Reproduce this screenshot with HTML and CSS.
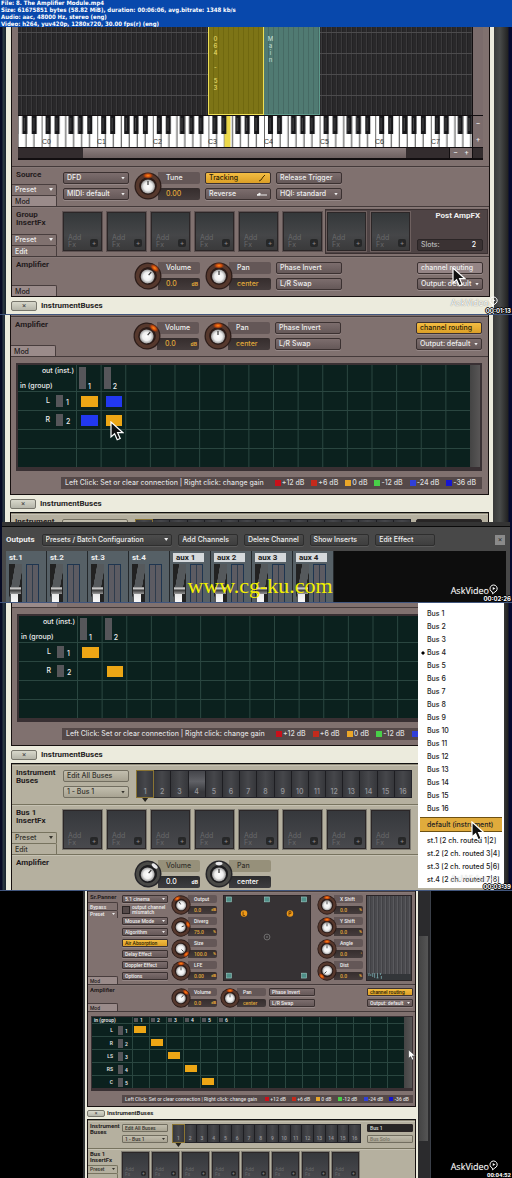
FILE: index.html
```html
<!DOCTYPE html>
<html lang="en">
<head>
<meta charset="utf-8">
<title>8. The Amplifier Module.mp4</title>
<link rel="stylesheet" href="styles.css">
</head>
<body>
<svg class="defs" aria-hidden="true">
  <defs>
    <radialGradient id="cap"><stop offset="0" stop-color="#fff"/><stop offset=".6" stop-color="#eee"/><stop offset="1" stop-color="#999"/></radialGradient>
    <radialGradient id="glow"><stop offset="0" stop-color="#ff8a1c"/><stop offset=".5" stop-color="#c4470c"/><stop offset="1" stop-color="#5a2a18" stop-opacity="0"/></radialGradient>
    <symbol id="knob" viewBox="0 0 28 28">
      <circle cx="14" cy="14" r="13.5" fill="#2c1d1a"/>
      <circle cx="14" cy="14" r="10.5" fill="none" stroke="#56382d" stroke-width="3.5"/>
      <circle cx="14" cy="14" r="8.5" fill="#2c1c19"/>
      <ellipse cx="14" cy="3.6" rx="6" ry="3.4" fill="url(#glow)"/>
      <circle cx="14" cy="14.5" r="7" fill="url(#cap)"/>
      <path d="M14 9v4" stroke="#333" stroke-width="1.2"/>
    </symbol>
    <symbol id="knob-dark" viewBox="0 0 28 28">
      <circle cx="14" cy="14" r="13.5" fill="#26262a"/>
      <circle cx="14" cy="14" r="10.5" fill="none" stroke="#4a4a47" stroke-width="3"/>
      <circle cx="14" cy="14" r="8.8" fill="#1c1c1e"/>
      <ellipse cx="14" cy="3.6" rx="3.5" ry="1.8" fill="#e8e8ea"/>
      <circle cx="14" cy="14.5" r="7" fill="url(#cap)"/>
      <path d="M14 9v4" stroke="#333" stroke-width="1.2"/>
    </symbol>
    <symbol id="pointer" viewBox="0 0 14 20"><path d="M1 1v15l3.6-3.2 2.6 6 3-1.3-2.6-5.8H13z" fill="#111" stroke="#fff" stroke-width="1.2"/></symbol>
    <symbol id="pointer-light" viewBox="0 0 14 20"><path d="M1 1v15l3.6-3.2 2.6 6 3-1.3-2.6-5.8H13z" fill="#fff" stroke="#333" stroke-width="1"/></symbol>
    <symbol id="bubble" viewBox="0 0 10 12"><path d="M4 10.8 3.6 8.7A4 4 0 1 1 6.6 8.7z" fill="none" stroke="#fff" stroke-width="1.1"/><path d="M4.2 3.2v3.4l2.8-1.7z" fill="#fff"/></symbol>
    <pattern id="octave" x="23.6" width="55.6" height="31" patternUnits="userSpaceOnUse">
      <rect width="55.6" height="31" fill="#fff"/>
      <path d="M.3 0v31M8.2 0v31M16.1 0v31M24.1 0v31M32 0v31M40 0v31M47.9 0v31" stroke="#444" stroke-width="1"/>
    </pattern>
    <pattern id="sharps" x="23.6" width="55.6" height="31" patternUnits="userSpaceOnUse">
      <path d="M4 0h5v18H4zM13 0h5v18h-5zM27 0h5v18h-5zM36.3 0h5v18h-5zM45.7 0h5v18h-5z" fill="#17171a"/>
      <path d="M5.5 2h1v13h-1zM14.5 2h1v13h-1zM28.5 2h1v13h-1zM37.8 2h1v13h-1zM47.2 2h1v13h-1z" fill="#4a4a4c"/>
    </pattern>
  </defs>
</svg>

<header class="info">
  <p>File: 8. The Amplifier Module.mp4</p>
  <p>Size: 61675851 bytes (58.82 MiB), duration: 00:06:06, avg.bitrate: 1348 kb/s</p>
  <p>Audio: aac, 48000 Hz, stereo (eng)</p>
  <p>Video: h264, yuv420p, 1280x720, 30.00 fps(r) (eng)</p>
</header>

<main>
<section class="frame">
  <div class="window">
    <div class="panel">
      <div class="mapper">
        <div class="zones">
          <div class="zone zone-gold">064 - 53</div>
          <div class="zone zone-teal">Main</div>
        </div>
        <div class="vbar"></div>
        <div class="keys">
          <svg viewBox="0 0 454 31" role="img" aria-label="Keyboard">
            <rect width="454" height="31" fill="url(#octave)"/>
            <rect x="206.5" width="6" height="31" fill="#ecd84a"/>
            <rect width="454" height="31" fill="url(#sharps)"/>
            <g class="key-names"><text x="24" y="28">C0</text><text x="79" y="28">C1</text><text x="135" y="28">C2</text><text x="190" y="28">C3</text><text x="246" y="28">C4</text><text x="302" y="28">C5</text><text x="357" y="28">C6</text><text x="413" y="28">C7</text></g>
          </svg>
        </div>
        <div class="zoomers vertical"><button>−</button><button>+</button></div>
        <div class="hbar"><div class="track"><div class="thumb"></div></div><div class="zoomers"><button>−</button><button>+</button></div></div>
        <div class="corner"></div>
      </div>

      <div class="module">
        <div class="rail"><h2>Source</h2><button class="tab menu-tab">Preset</button><button class="tab lit">Mod</button></div>
        <div class="col">
          <span class="pick"><select aria-label="Source type"><option>DFD</option></select></span>
          <span class="pick"><select aria-label="MIDI channel"><option>MIDI: default</option></select></span>
        </div>
        <label class="dial"><svg class="knob"><use href="#knob"/></svg><span class="readout"><span class="name">Tune</span><span class="value"><input value="0.00"></span></span></label>
        <div class="col">
          <button class="ctl on spread">Tracking <svg viewBox="0 0 8 8"><path d="M1 7 3 6 5 3 7 1" fill="none" stroke="#4a3300"/></svg></button>
          <button class="ctl spread">Reverse <svg viewBox="0 0 10 8"><path d="M0 5h10M0 5l3-2v2z" fill="#eee" stroke="#eee"/></svg></button>
        </div>
        <div class="col">
          <button class="ctl">Release Trigger</button>
          <span class="pick"><select aria-label="Quality"><option>HQI: standard</option></select></span>
        </div>
      </div>

      <div class="module inserts">
        <div class="rail"><h2>Group<br>InsertFx</h2><button class="tab menu-tab">Preset</button><button class="tab">Edit</button></div>
        <div class="slots">
          <button class="slot">Add<br>Fx<i>+</i></button><button class="slot">Add<br>Fx<i>+</i></button><button class="slot">Add<br>Fx<i>+</i></button><button class="slot">Add<br>Fx<i>+</i></button><button class="slot">Add<br>Fx<i>+</i></button><button class="slot">Add<br>Fx<i>+</i></button>
        </div>
        <div class="post">
          <button class="slot">Add<br>Fx<i>+</i></button><button class="slot">Add<br>Fx<i>+</i></button>
          <div class="post-info"><h3>Post AmpFX</h3><label class="field">Slots:<input value="2"></label></div>
        </div>
      </div>

      <div class="module">
        <div class="rail"><h2>Amplifier</h2><button class="tab lit">Mod</button></div>
        <div class="col"></div>
        <label class="dial"><svg class="knob turn-right"><use href="#knob"/></svg><span class="readout"><span class="name">Volume</span><span class="value"><input value="0.0"><b>dB</b></span></span></label>
        <label class="dial"><svg class="knob"><use href="#knob"/></svg><span class="readout"><span class="name">Pan</span><span class="value"><input value="center"></span></span></label>
        <div class="col"><button class="ctl">Phase Invert</button><button class="ctl">L/R Swap</button></div>
        <div class="col last">
          <button class="ctl hover">channel routing</button>
          <span class="pick"><select aria-label="Output"><option>Output: default</option></select></span>
        </div>
      </div>
    </div>
    <div class="buses-bar"><button class="fold">×</button><h2>InstrumentBuses</h2></div>
  </div>
  <svg class="pointer at-routing"><use href="#pointer"/></svg>
  <div class="brand">AskVideo<svg><use href="#bubble"/></svg></div>
  <time class="stamp">00:01:13</time>
</section>

<section class="frame shifted">
  <div class="window">
    <div class="panel gap-top">
      <div class="module">
        <div class="rail"><h2>Amplifier</h2><button class="tab lit">Mod</button></div>
        <div class="col"></div>
        <label class="dial"><svg class="knob turn-right"><use href="#knob"/></svg><span class="readout"><span class="name">Volume</span><span class="value"><input value="0.0"><b>dB</b></span></span></label>
        <label class="dial"><svg class="knob"><use href="#knob"/></svg><span class="readout"><span class="name">Pan</span><span class="value"><input value="center"></span></span></label>
        <div class="col"><button class="ctl">Phase Invert</button><button class="ctl">L/R Swap</button></div>
        <div class="col last">
          <button class="ctl on">channel routing</button>
          <span class="pick"><select aria-label="Output"><option>Output: default</option></select></span>
        </div>
      </div>
      <div class="routing">
        <div class="matrix">
          <div class="grid">
            <div class="row head"><div class="corner-label"><span>out (inst.)</span><span>in (group)</span></div><div class="out"><i></i>1</div><div class="out"><i></i>2</div></div>
            <div class="row"><div class="in"><span>L</span><i></i><b>1</b></div><button class="cell gold" aria-label="L to 1"></button><button class="cell blue" aria-label="L to 2"></button></div>
            <div class="row"><div class="in"><span>R</span><i></i><b>2</b></div><button class="cell blue" aria-label="R to 1"></button><button class="cell gold" aria-label="R to 2"></button></div>
            <div class="row"><div class="in"></div></div>
            <div class="row"><div class="in"></div></div>
          </div>
          <div class="scroll"></div>
        </div>
        <div class="legend"><p>Left Click: Set or clear connection | Right click: change gain</p><span class="c-red">+12 dB</span><span class="c-brick">+6 dB</span><span class="c-gold">0 dB</span><span class="c-green">-12 dB</span><span class="c-blue">-24 dB</span><span class="c-deep">-36 dB</span></div>
      </div>
    </div>
    <div class="buses-bar"><button class="fold">×</button><h2>InstrumentBuses</h2></div>
    <div class="panel beige">
      <div class="module buses">
        <div class="rail"><h2>Instrument</h2></div>
        <div class="col"><button class="ctl"></button></div>
        <div class="strip"><span class="current"></span><span></span><span></span><span></span><span></span><span></span><span></span><span></span><span></span><span></span><span></span><span></span><span></span><span></span><span></span><span></span></div>
        <div class="col last"><span class="field"></span></div>
      </div>
    </div>
  </div>
  <div class="outputs">
    <div class="toolbar">
      <h2>Outputs</h2>
      <span class="pick wide"><select aria-label="Presets"><option>Presets / Batch Configuration</option></select></span>
      <button class="ctl">Add Channels</button><button class="ctl">Delete Channel</button><button class="ctl">Show Inserts</button><button class="ctl">Edit Effect</button>
      <button class="close" aria-label="Close">×</button>
    </div>
    <div class="mixer">
      <div class="channel"><h3>st.1</h3><div class="fader"></div><div class="meter"></div></div>
      <div class="channel"><h3>st.2</h3><div class="fader"></div><div class="meter"></div></div>
      <div class="channel"><h3>st.3</h3><div class="fader"></div><div class="meter"></div></div>
      <div class="channel"><h3>st.4</h3><div class="fader"></div><div class="meter"></div></div>
      <div class="channel aux"><h3>aux 1</h3><div class="fader"></div><div class="meter"></div></div>
      <div class="channel aux"><h3>aux 2</h3><div class="fader"></div><div class="meter"></div></div>
      <div class="channel aux"><h3>aux 3</h3><div class="fader"></div><div class="meter"></div></div>
      <div class="channel aux"><h3>aux 4</h3><div class="fader"></div><div class="meter"></div></div>
    </div>
  </div>
  <svg class="pointer at-cell"><use href="#pointer"/></svg>
  <p class="site">www.cg-ku.com</p>
  <div class="brand">AskVideo<svg><use href="#bubble"/></svg></div>
  <time class="stamp">00:02:26</time>
</section>

<section class="frame">
  <div class="window">
    <div class="panel">
      <div class="sliver"></div>
      <div class="routing">
        <div class="matrix">
          <div class="grid">
            <div class="row head"><div class="corner-label"><span>out (inst.)</span><span>in (group)</span></div><div class="out"><i></i>1</div><div class="out"><i></i>2</div></div>
            <div class="row"><div class="in"><span>L</span><i></i><b>1</b></div><button class="cell gold" aria-label="L to 1"></button></div>
            <div class="row"><div class="in"><span>R</span><i></i><b>2</b></div><span></span><button class="cell gold" aria-label="R to 2"></button></div>
            <div class="row"><div class="in"></div></div>
            <div class="row"><div class="in"></div></div>
          </div>
          <div class="scroll"></div>
        </div>
        <div class="legend"><p>Left Click: Set or clear connection | Right click: change gain</p><span class="c-red">+12 dB</span><span class="c-brick">+6 dB</span><span class="c-gold">0 dB</span><span class="c-green">-12 dB</span><span class="c-blue ghost"></span><span class="c-deep ghost"></span></div>
      </div>
    </div>
    <div class="buses-bar"><button class="fold">×</button><h2>InstrumentBuses</h2></div>
    <div class="panel beige">
      <div class="module buses">
        <div class="rail"><h2>Instrument<br>Buses</h2></div>
        <div class="col"><button class="ctl">Edit All Buses</button><span class="pick"><select aria-label="Bus"><option>1 - Bus 1</option></select></span></div>
        <div class="strip"><span class="current">1</span><span>2</span><span>3</span><span class="warm">4</span><span>5</span><span>6</span><span>7</span><span>8</span><span>9</span><span>10</span><span>11</span><span>12</span><span>13</span><span>14</span><span>15</span><span>16</span></div>
        <div class="col last"></div>
      </div>
      <div class="module inserts">
        <div class="rail"><h2>Bus 1<br>InsertFx</h2><button class="tab menu-tab">Preset</button><button class="tab">Edit</button></div>
        <div class="slots">
          <button class="slot">Add<br>Fx<i>+</i></button><button class="slot">Add<br>Fx<i>+</i></button><button class="slot">Add<br>Fx<i>+</i></button><button class="slot">Add<br>Fx<i>+</i></button><button class="slot">Add<br>Fx<i>+</i></button><button class="slot">Add<br>Fx<i>+</i></button><button class="slot">Add<br>Fx<i>+</i></button><button class="slot">Add<br>Fx<i>+</i></button>
        </div>
      </div>
      <div class="module">
        <div class="rail"><h2>Amplifier</h2></div>
        <div class="col"></div>
        <label class="dial"><svg class="knob turn-right"><use href="#knob-dark"/></svg><span class="readout"><span class="name">Volume</span><span class="value"><input value="0.0"><b>dB</b></span></span></label>
        <label class="dial"><svg class="knob"><use href="#knob-dark"/></svg><span class="readout"><span class="name">Pan</span><span class="value"><input value="center"></span></span></label>
      </div>
    </div>
  </div>
  <ul class="popup">
    <li><button>Bus 1</button></li><li><button>Bus 2</button></li><li><button>Bus 3</button></li><li class="checked"><button>Bus 4</button></li><li><button>Bus 5</button></li><li><button>Bus 6</button></li><li><button>Bus 7</button></li><li><button>Bus 8</button></li><li><button>Bus 9</button></li><li><button>Bus 10</button></li><li><button>Bus 11</button></li><li><button>Bus 12</button></li><li><button>Bus 13</button></li><li><button>Bus 14</button></li><li><button>Bus 15</button></li><li><button>Bus 16</button></li>
    <li class="chosen"><button>default (instrument)</button></li>
    <li><button>st.1 [2 ch. routed 1|2]</button></li><li><button>st.2 [2 ch. routed 3|4]</button></li><li><button>st.3 [2 ch. routed 5|6]</button></li><li><button>st.4 [2 ch. routed 7|8]</button></li>
  </ul>
  <div class="brand faded">AskVideo<svg><use href="#bubble"/></svg></div>
  <svg class="pointer at-menu"><use href="#pointer"/></svg>
  <time class="stamp">00:03:39</time>
</section>

<section class="frame compact">
  <div class="window">
    <div class="panel">
      <div class="module">
        <div class="rail"><h2>Sr.Panner</h2><button class="tab">Bypass</button><button class="tab menu-tab">Preset</button><button class="tab lit push">Mod</button></div>
        <div class="col">
          <span class="pick"><select aria-label="Layout"><option>5.1 cinema</option></select></span>
          <label class="check"><input type="checkbox"><span>output channel<br>mismatch</span></label>
          <span class="pick"><select aria-label="Mode"><option>Mouse Mode</option></select></span>
          <span class="pick"><select aria-label="Algorithm"><option>Algorithm</option></select></span>
          <button class="ctl on">Air Absorption</button>
          <button class="ctl">Delay Effect</button>
          <button class="ctl">Doppler Effect</button>
          <button class="ctl">Options</button>
        </div>
        <div class="col">
          <label class="dial"><svg class="knob turn-left"><use href="#knob"/></svg><span class="readout"><span class="name">Output</span><span class="value"><input value="0.0"><b>dB</b></span></span></label>
          <label class="dial"><svg class="knob turn-east"><use href="#knob"/></svg><span class="readout"><span class="name">Diverg</span><span class="value"><input value="75.0"><b>%</b></span></span></label>
          <label class="dial"><svg class="knob turn-full"><use href="#knob"/></svg><span class="readout"><span class="name">Size</span><span class="value"><input value="100.0"><b>%</b></span></span></label>
          <label class="dial"><svg class="knob"><use href="#knob"/></svg><span class="readout"><span class="name">LFE</span><span class="value"><input value="0.00"><b>dB</b></span></span></label>
        </div>
        <div class="surround">
          <svg viewBox="0 0 87 86" role="img" aria-label="Surround field">
            <g fill="#4f8f88" stroke="#9fd0c8" stroke-width=".6"><rect x="2" y="1" width="5" height="5"/><rect x="41" y="1" width="5" height="5"/><rect x="79" y="1" width="5" height="5"/><rect x="2" y="79" width="5" height="5"/><rect x="79" y="79" width="5" height="5"/></g>
            <circle cx="20" cy="18" r="3.3" fill="#f09a18"/><circle cx="67" cy="18" r="3.3" fill="#f09a18"/>
            <path d="M19 16v4h2M66 20v-4h2v2h-2" fill="none" stroke="#5a3200" stroke-width=".8"/>
            <circle cx="43.5" cy="42" r="3" fill="none" stroke="#888" stroke-width=".7"/><circle cx="43.5" cy="42" r=".7" fill="#999"/>
          </svg>
        </div>
        <div class="col">
          <label class="dial"><svg class="knob"><use href="#knob"/></svg><span class="readout"><span class="name">X Shift</span><span class="value"><input value="0.0"><b>%</b></span></span></label>
          <label class="dial"><svg class="knob"><use href="#knob"/></svg><span class="readout"><span class="name">Y Shift</span><span class="value"><input value="0.0"><b>%</b></span></span></label>
          <label class="dial"><svg class="knob"><use href="#knob"/></svg><span class="readout"><span class="name">Angle</span><span class="value"><input value="0.0"><b>°</b></span></span></label>
          <label class="dial"><svg class="knob turn-min"><use href="#knob"/></svg><span class="readout"><span class="name">Dist</span><span class="value"><input value="0.0"><b>%</b></span></span></label>
        </div>
        <div class="levels"><svg viewBox="0 0 46 8"><path d="M2 1v3M4 2v2M6 1v4M8 1v5M11 1v5M14 1v2M10 6h2M15 4v3" stroke="#7fb4b8" stroke-width=".8"/></svg></div>
      </div>
      <div class="module">
        <div class="rail"><h2>Amplifier</h2><button class="tab lit">Mod</button></div>
        <div class="col"></div>
        <label class="dial"><svg class="knob turn-right"><use href="#knob"/></svg><span class="readout"><span class="name">Volume</span><span class="value"><input value="0.0"><b>dB</b></span></span></label>
        <label class="dial"><svg class="knob"><use href="#knob"/></svg><span class="readout"><span class="name">Pan</span><span class="value"><input value="center"></span></span></label>
        <div class="col"><button class="ctl">Phase Invert</button><button class="ctl">L/R Swap</button></div>
        <div class="col last">
          <button class="ctl on">channel routing</button>
          <span class="pick"><select aria-label="Output"><option>Output: default</option></select></span>
        </div>
      </div>
      <div class="routing">
        <div class="matrix">
          <div class="grid">
            <div class="row head"><div class="corner-label"><span>in (group)</span></div><div class="out"><i></i>1</div><div class="out"><i></i>2</div><div class="out"><i></i>3</div><div class="out"><i></i>4</div><div class="out"><i></i>5</div><div class="out"><i></i>6</div></div>
            <div class="row"><div class="in"><span>L</span><i></i><b>1</b></div><button class="cell gold" aria-label="L to 1"></button></div>
            <div class="row"><div class="in"><span>R</span><i></i><b>2</b></div><span></span><button class="cell gold" aria-label="R to 2"></button></div>
            <div class="row"><div class="in"><span>LS</span><i></i><b>3</b></div><span></span><span></span><button class="cell gold" aria-label="LS to 3"></button></div>
            <div class="row"><div class="in"><span>RS</span><i></i><b>4</b></div><span></span><span></span><span></span><button class="cell gold" aria-label="RS to 4"></button></div>
            <div class="row"><div class="in"><span>C</span><i></i><b>5</b></div><span></span><span></span><span></span><span></span><button class="cell gold" aria-label="C to 5"></button></div>
          </div>
          <div class="scroll"></div>
        </div>
        <div class="legend"><p>Left Click: Set or clear connection | Right click: change gain</p><span class="c-red">+12 dB</span><span class="c-brick">+6 dB</span><span class="c-gold">0 dB</span><span class="c-green">-12 dB</span><span class="c-blue">-24 dB</span><span class="c-deep">-36 dB</span></div>
      </div>
    </div>
    <div class="buses-bar"><button class="fold">×</button><h2>InstrumentBuses</h2></div>
    <div class="panel beige">
      <div class="module buses">
        <div class="rail"><h2>Instrument<br>Buses</h2></div>
        <div class="col"><button class="ctl">Edit All Buses</button><span class="pick"><select aria-label="Bus"><option>1 - Bus 1</option></select></span></div>
        <div class="strip"><span class="current">1</span><span>2</span><span>3</span><span>4</span><span>5</span><span>6</span><span>7</span><span>8</span><span>9</span><span>10</span><span>11</span><span>12</span><span>13</span><span>14</span><span>15</span><span>16</span></div>
        <div class="col last"><input class="field" aria-label="Bus name" value="Bus 1"><button class="ctl faint">Bus Solo</button></div>
      </div>
      <div class="module inserts">
        <div class="rail"><h2>Bus 1<br>InsertFx</h2><button class="tab menu-tab">Preset</button><button class="tab"></button></div>
        <div class="slots">
          <button class="slot">Add<br>Fx<i>+</i></button><button class="slot">Add<br>Fx<i>+</i></button><button class="slot">Add<br>Fx<i>+</i></button><button class="slot">Add<br>Fx<i>+</i></button><button class="slot">Add<br>Fx<i>+</i></button><button class="slot">Add<br>Fx<i>+</i></button><button class="slot">Add<br>Fx<i>+</i></button><button class="slot">Add<br>Fx<i>+</i></button>
        </div>
      </div>
    </div>
  </div>
  <div class="page-scroll"><div></div></div>
  <svg class="pointer at-scroll"><use href="#pointer-light"/></svg>
  <div class="brand">AskVideo<svg><use href="#bubble"/></svg></div>
  <time class="stamp">00:04:52</time>
</section>
</main>
</body>
</html>
```
FILE: styles.css
```css
* { box-sizing: border-box; margin: 0; }

body {
  background: #000;
  color: #eee;
  font: 500 7px/8px Inter, Roboto, "Liberation Sans", sans-serif;
}

button, input, select { font: inherit; color: inherit; border: 0; padding: 0; background: none; min-width: 0; border-radius: 0; }
select { appearance: none; }
i, b { font-style: normal; font-weight: inherit; }
ul { list-style: none; padding: 0; }
.defs { position: absolute; width: 0; height: 0; }

/* File details above the stills */
.info {
  display: flex;
  flex-direction: column;
  gap: 1px;
  padding: 0 1px;
  background: #0848ac;
  color: #fff;
  font: 700 6px/6px "DejaVu Sans Condensed", "DejaVu Sans", sans-serif;
}

/* One still of the film */
.frame {
  --ctl-h: 12px;
  --ctl-w: 66px;
  --gap: 5px;
  --row-gap: 4px;
  --rail: 45px;
  --knob: 28px;
  --title: 8px;
  --slot: 39px;
  --label-col: 58px;
  --pad: 5px;
  position: relative;
  display: flex;
  flex-direction: column;
  aspect-ratio: 16 / 9;
  overflow: hidden;
  border-bottom: 1px solid #41567e;
  background:
    linear-gradient(to right, #060a24 2px, #2d3a44 3px, #17222c 6px, transparent 6px),
    linear-gradient(to left, #050a30 3px, #222 4px, #484a49 12px, #3a3b3b 18px);
}
.window {
  flex: 1;
  min-height: 0;
  overflow: hidden;
  margin: 0 18px 0 6px;
  border: solid #ecebdd;
  border-width: 0 4px 0 5px;
  background: #ecebdd;
}
.shifted .window { margin: 0 19px 0 5px; }
.panel {
  border: 1px solid #16100f;
  border-top: 0;
  background: #80716f;
}
.gap-top { padding-top: 1px; }

/* Zone map and keyboard */
.mapper {
  display: grid;
  grid-template-columns: 1fr 10px;
  gap: 1px;
  margin: 0 6px 6px;
  padding-bottom: 2px;
  background: #120e10;
}
.zones {
  display: grid;
  grid-template-columns: 190px 56px 56px 1fr;
  height: 88px;
  background:
    repeating-linear-gradient(to bottom, transparent 0 5px, #4c4b4d 5px 6px, transparent 6px 21px),
    repeating-linear-gradient(to right, #29282a 0 3px, #3a393b 3px 4px, #232224 4px 5px);
}
.zone {
  padding: 8px 0 0 2px;
  font-size: 6px;
  line-height: 8px;
  writing-mode: vertical-lr;
  text-orientation: upright;
}
.zone-gold {
  grid-column: 2;
  border: solid #eedf55;
  border-width: 0 1px 1px;
  background: repeating-linear-gradient(to right, #7d7416 0 4px, #70680f 4px 5px);
  color: #e8dc6a;
}
.zone-teal {
  border: solid #5f9a8c;
  border-width: 0 1px 1px 0;
  background: repeating-linear-gradient(to right, #507a72 0 4px, #466a64 4px 5px);
  color: #bcd8ce;
}
.vbar { background: #7b6c6c; }
.keys svg { display: block; width: 100%; }
.key-names { font: 7px "Liberation Sans", sans-serif; fill: #333; }
.zoomers { display: grid; grid-template-columns: 1fr 1fr; width: 22px; background: #7b6c6c; }
.zoomers.vertical { grid-template-columns: 1fr; grid-template-rows: 1fr 1fr; width: auto; gap: 1px; }
.zoomers button { line-height: 10px; color: #eee; }
.hbar { display: flex; gap: 1px; height: 10px; }
.track { flex: 1; background: #332c2e; }
.thumb { width: 75%; height: 100%; margin-left: 15%; background: linear-gradient(#8d7f7f, #6d6060); }
.corner { background: #332c2e; }

/* Module rows */
.module {
  display: flex;
  gap: var(--gap);
  padding: var(--pad) 6px 0 0;
  min-height: 40px;
  border-top: 1px solid #443a3a;
  box-shadow: inset 0 1px #94868455;
}
.module.inserts { min-height: 50px; }
.rail {
  display: flex;
  flex-direction: column;
  width: var(--rail);
  margin: calc(0px - var(--pad)) 1px 0 0;
  flex: none;
}
.rail h2 { flex: 1; padding: 4px 0 0 4px; color: #241c1d; white-space: nowrap; }
h2, h3 { font: 700 var(--title)/8px Roboto, "Liberation Sans", sans-serif; }
.tab {
  height: 11px;
  padding: 0 3px;
  border: solid #483d3d;
  border-width: 1px 1px 0 0;
  border-radius: 0 2px 0 0;
  text-align: left;
  line-height: 9px;
}
.tab.lit { background: #9a8b8a; color: #241c1d; }
.menu-tab { display: flex; justify-content: space-between; }
.menu-tab::after, .pick::after {
  content: "";
  width: 4px;
  height: 3px;
  margin-top: 3px;
  background: currentColor;
  clip-path: polygon(0 0, 100% 0, 50% 100%);
  flex: none;
}
.col { display: flex; flex-direction: column; gap: var(--row-gap); width: var(--ctl-w); flex: none; }
.last { margin-left: auto; }
.ctl, .pick {
  display: block;
  height: var(--ctl-h);
  padding: 0 3px;
  border: 1px solid #3b3131;
  border-radius: 2px;
  background: linear-gradient(#7c6d6d, #655858);
  box-shadow: 0 1px #958786;
  text-align: left;
  line-height: 10px;
  white-space: nowrap;
}
.pick { display: flex; align-items: center; padding: 0 3px; }
.pick select { flex: 1; height: 100%; }
.pick::after { margin-top: 0; }
.ctl.on { background: linear-gradient(#f3bd43, #dc9f26); color: #2c1e05; }
.ctl.hover { background: #958586; }
.spread { display: flex; justify-content: space-between; align-items: center; }
.spread svg { width: 10px; height: 8px; }

.dial { display: flex; width: var(--ctl-w); flex: none; }
.knob { position: relative; width: var(--knob); height: var(--knob); flex: none; }
.turn-right { transform: rotate(40deg); }
.turn-left { transform: rotate(-30deg); }
.turn-east { transform: rotate(70deg); }
.turn-full { transform: rotate(135deg); }
.turn-min { transform: rotate(-135deg); }
.readout { flex: 1; display: flex; flex-direction: column; gap: var(--row-gap); margin-left: -4px; min-width: 0; }
.name, .value { display: flex; height: var(--ctl-h); padding: 0 2px 0 8px; align-items: center; border-radius: 0 2px 2px 0; white-space: nowrap; }
.name { background: #645757; }
.value { background: linear-gradient(#352d2d, #453c3c); color: #e0a93a; }
.value input { flex: 1; width: 0; }
.value b { font-size: 5px; font-weight: 700; }

.slots { display: flex; gap: var(--gap); }
.slot {
  position: relative;
  width: var(--slot);
  height: var(--slot);
  padding: 18px 0 0 4px;
  border: 1px solid #2b2627;
  outline: 1px solid #5e5252;
  background: linear-gradient(#34383a, #454648 60%, #3a3a3b);
  color: #68696b;
  text-align: left;
  line-height: 7px;
  font-weight: 400;
  flex: none;
}
.slot i {
  position: absolute;
  right: 3px;
  bottom: 3px;
  width: 8px;
  height: 8px;
  border-radius: 2px;
  background: #262728;
  color: #8c8c8c;
  text-align: center;
  line-height: 8px;
}
.post {
  flex: 1;
  display: flex;
  gap: var(--gap);
  margin: -3px -4px 2px -2px;
  padding: 2px 4px 0 1px;
  border: 1px solid #3b3132;
  background: #4f4445;
}
.post .slot { outline-color: #83737299; }
.post-info { flex: 1; display: flex; flex-direction: column; justify-content: space-between; padding: 0 0 2px 2px; text-align: right; }
.post-info h3 { padding-right: 3px; white-space: nowrap; }
.field {
  display: flex;
  width: 100%;
  height: var(--ctl-h);
  padding: 0 3px;
  border: 1px solid #2b2526;
  border-radius: 2px;
  background: #3a3233;
  line-height: 10px;
}
.post-info .field { width: var(--ctl-w); color: #bbb; }
.field input { flex: 1; width: 0; padding-right: 3px; text-align: right; color: #fff; }

/* Routing matrix */
.routing { padding: 6px 6px 5px 5px; border-top: 1px solid #443a3a; }
.matrix { display: flex; padding: 2px 2px 4px; background: #393033; }
.grid {
  flex: 1;
  background: linear-gradient(to right, #2a4640 1px, #0b211e 1px) var(--label-col) 0 / calc((100% - var(--label-col)) / 16) 100%;
}
.row {
  display: grid;
  grid-template-columns: var(--label-col) repeat(16, 1fr);
  height: 19px;
  border-top: 1px solid #2a4640;
}
.row.head { height: 26px; border-top: 0; }
.corner-label { display: flex; flex-direction: column; justify-content: space-between; padding: 2px 2px 1px; background: #0b211e; }
.corner-label span:first-child:not(:last-child) { text-align: right; }
.out { display: flex; align-items: flex-end; gap: 2px; padding-left: 3px; }
.out i { width: 7px; height: 22px; margin-bottom: 2px; background: #56565a; }
.in { display: flex; align-items: center; gap: 3px; padding: 0 5px; background: #0b211e; }
.in span { flex: 1; text-align: right; padding-right: 3px; }
.in i { width: 7px; height: 12px; background: #56565a; }
.in b { padding-top: 3px; width: 5px; }
.cell { margin: 4px 3px 3px 5px; }
.gold { background: #eda615; }
.blue { background: #2238f0; }
.scroll { width: 10px; background: linear-gradient(to right, #444, #585656); }
.legend {
  display: flex;
  justify-content: space-between;
  margin: 6px 0 0 45px;
  padding: 0 6px 0 4px;
  background: #544848;
  color: #ddd;
  line-height: 12px;
  white-space: nowrap;
}
.legend p { margin-right: 4px; }
.legend span::before { content: ""; display: inline-block; width: 6px; height: 6px; margin-right: 1px; vertical-align: -1px; background: var(--c); }
.legend .ghost { width: 29px; }
.c-red { --c: #c9101a; } .c-brick { --c: #c42a1c; } .c-gold { --c: #eaa628; }
.c-green { --c: #48cf48; } .c-blue { --c: #3040d8; } .c-deep { --c: #1616d0; }
.sliver { width: var(--rail); height: 4px; background: #9a8b8a; }

/* Instrument buses */
.buses-bar { display: flex; align-items: center; gap: 4px; height: 17px; color: #26241f; }
.fold {
  width: 26px;
  height: 10px;
  border: 1px solid #77766c;
  border-radius: 2px;
  background: linear-gradient(#d8d8cb, #b5b5a9);
  color: #444;
  line-height: 8px;
}
.beige { border-top: 1px solid #111; background: #b5b09f; color: #34322c; }
.beige .module { border-top-color: #77735f; box-shadow: inset 0 1px #c6c2b3; }
.beige .module:first-child { border-top-color: #8d8877; }
.beige .tab { border-color: #77735f; }
.beige .ctl, .beige .pick { border-color: #726e60; background: linear-gradient(#c2beae, #a8a392); box-shadow: none; }
.beige .faint { color: #777466; }
.beige .name { background: #96907a; }
.beige .value { background: linear-gradient(#2c2c2e, #3d3d40); color: #fff; }
.beige .slot { outline-color: #7e7b72; background: linear-gradient(#36383c, #48494d); }
.beige .field { background: #272525; color: #ddd; }
.strip {
  flex: 1;
  display: grid;
  grid-template-columns: repeat(16, 1fr);
  gap: 1px;
  height: 28px;
  margin-left: 2px;
  border: 1px solid #24242a;
  background: #1e1e22;
  color: #96979c;
}
.strip span { display: flex; align-items: flex-end; justify-content: center; padding-bottom: 1px; background: linear-gradient(to right, #36373b, #46474b 50%, #36373b); }
.strip .current { position: relative; outline: 1px solid #8a7433; }
.strip .current::after { content: ""; position: absolute; top: 100%; left: calc(50% - 3px); width: 6px; height: 4px; background: #26241f; clip-path: polygon(0 0, 100% 0, 50% 100%); margin-top: 1px; }
.strip .warm { background: linear-gradient(#44454a, #606166 40%, #38393d 80%); }
.buses .last { margin-left: 0; }

/* Outputs mixer */
.outputs { margin: 0 2px; border-top: 4px solid #343434; background: #484848; }
.toolbar { display: flex; align-items: center; gap: 6px; height: 25px; padding: 1px 5px 0 4px; border-top: 1px solid #0a0a0a; }
.toolbar h2 { margin-right: 1px; }
.toolbar .ctl, .toolbar .pick { flex: 1 1 59px; border-color: #2e2e2e; background: linear-gradient(#4c4c4c, #3e3e3e); box-shadow: 0 1px #5a5a5a; }
.toolbar .wide { flex: 1 1 130px; }
.close { width: 10px; height: 10px; margin-left: 54px; background: #8a8a8a; color: #333; line-height: 10px; flex: none; }
.mixer { display: flex; height: 51px; margin: 0 4px; background: #0d0d0d; overflow: hidden; }
.channel {
  display: grid;
  grid-template-columns: 13px 13px;
  grid-template-rows: 9px 40px;
  gap: 2px 4px;
  width: 41px;
  padding: 2px 0 0 3px;
  border-right: 1px solid #24282b;
  background: #566066;
}
.channel h3 { grid-column: 1 / -1; line-height: 9px; }
.aux h3 { width: 31px; padding-left: 3px; background: #d5d9dc; color: #222; }
.fader {
  background:
    linear-gradient(#e8e8e8, #fff) 2px 30px / 7px 12px no-repeat,
    linear-gradient(#888, #ddd 30%, #333 40%, #999) 1px 23px / 11px 7px no-repeat,
    linear-gradient(100deg, #222 30%, #55595c 32% 70%, #222 72%);
}
.meter { border: 1px solid #1e3550; background: linear-gradient(to right, #5c5b62 45%, #2f3c4c 45% 55%, #5c5b62 55%); }

/* Output menu */
.popup { position: absolute; top: 0; right: 8px; width: 86px; padding: 4px 2px 2px; background: #fff; color: #222; line-height: 13px; }
.popup button { display: block; width: 100%; padding-left: 7px; text-align: left; white-space: nowrap; }
.checked { position: relative; }
.checked::before { content: ""; position: absolute; left: 1px; top: 5px; width: 4px; height: 4px; background: #000; clip-path: polygon(50% 0, 100% 50%, 50% 100%, 0 50%); }
.chosen { margin: 2px 0; border: solid #6e5112; border-width: 1px 0; background: #e0ab3c; }

/* Overlays on the stills */
.pointer { position: absolute; width: 14px; height: 20px; }
.at-routing { right: 46px; bottom: 27px; }
.at-cell { left: 110px; top: 106px; }
.at-menu { right: 27px; top: 218px; }
.at-scroll { left: 408px; top: 157px; width: 8px; height: 14px; }
.brand { position: absolute; right: 14px; bottom: 4px; display: flex; align-items: center; color: #fff; font: 400 9px/12px "Open Sans", sans-serif; text-shadow: 0 0 1px #555; }
.brand svg { width: 9px; height: 11px; margin-bottom: 3px; }
.faded { opacity: .5; }
.stamp { position: absolute; right: 1px; bottom: 0; font-size: 6px; line-height: 6px; font-weight: 700; color: #fff; text-shadow: 1px 0 #000, -1px 0 #000, 0 1px #000, 0 -1px #000; }
.site { position: absolute; left: 0; right: 0; bottom: 4px; padding-left: 8px; text-align: center; color: #f4f000; font: 22px/25px "Liberation Serif", serif; }

/* The smaller plug-in window of the last still */
.compact {
  --ctl-h: 8px;
  --ctl-w: 46px;
  --gap: 3px;
  --row-gap: 3px;
  --rail: 30px;
  --knob: 20px;
  --title: 6px;
  --slot: 27px;
  --label-col: 40px;
  --pad: 3px;
  aspect-ratio: 512 / 287;
  flex-direction: row;
  border-bottom: 0;
  background: #000;
  font: 500 5px/6px Roboto, "Liberation Sans", sans-serif;
}
.compact .window { margin: 0 0 0 85px; flex: 0 1 333px; border-width: 0 2px 0 2px; box-shadow: 0 0 0 2px #303234; }
.compact .page-scroll { flex: none; width: 13px; padding: 45px 2px 0 1px; background: #2b2b2d; border-right: 1px solid #3a3f48; }
.page-scroll div { height: 205px; background: linear-gradient(to right, #444, #555); }
.compact h2 { line-height: 6px; }
.compact .module { min-height: 27px; padding-right: 2px; }
.compact .module:first-child { min-height: 93px; }
.compact .beige .module:first-child { min-height: 28px; }
.compact .rail h2 { padding: 2px 0 0 2px; flex: none; }
.compact .tab { height: 8px; padding: 0 2px; line-height: 6px; }
.compact .lit, .compact .push { margin-top: auto; }
.compact .rail h2 + .tab:not(.lit) { margin-top: 2px; }
.compact .menu-tab::after { margin-top: 2px; }
.compact .menu-tab::after, .compact .pick::after { width: 3px; height: 2px; }
.compact .ctl, .compact .pick, .compact .field { line-height: 6px; padding: 0 2px; border-radius: 1px; }
.compact .name, .compact .value { padding: 0 1px 0 6px; }
.compact .dial { height: 19px; }
.compact .readout { margin-left: -3px; }
.compact .value b { font-size: 4px; }
.check { display: flex; gap: 2px; height: 8px; align-items: center; line-height: 5px; white-space: nowrap; }
.check input { appearance: none; width: 8px; height: 8px; border: 1px solid #2c2525; background: #554a4a; flex: none; }
.surround { flex: 1; max-width: 88px; margin: 0 3px; height: 86px; background: #363234; border: 1px solid #2a2426; }
.surround svg { display: block; width: 100%; height: 100%; }
.levels { display: flex; align-items: flex-end; width: 46px; height: 86px; border: 1px solid #2a2426; background: linear-gradient(transparent 78px, #333639 78px), repeating-linear-gradient(to right, #4a4a4e 0 2px, #5a5a5e 2px 3px, #414145 3px 4px); flex: none; }
.levels svg { width: 100%; height: 8px; }
.compact .routing { padding: 4px 2px 3px 3px; }
.compact .matrix { padding: 1px 1px 3px; }
.compact .scroll { width: 8px; }
.compact .row { height: 13px; }
.compact .row.head { height: 6px; }
.compact .corner-label { padding: 0 2px; }
.compact .out { padding-left: 2px; align-items: center; }
.compact .out i { width: 4px; height: 4px; margin: 0; }
.compact .in { gap: 2px; padding: 0 3px; }
.compact .in i { width: 5px; height: 9px; }
.compact .in b { width: 4px; padding-top: 2px; }
.compact .cell { margin: 2px 3px 3px 2px; }
.compact .legend { margin: 4px 0 0 31px; padding: 0 4px 0 3px; line-height: 8px; }
.compact .legend p { margin-right: 2px; }
.compact .legend span::before { width: 4px; height: 4px; vertical-align: 0; }
.compact .buses-bar { height: 12px; gap: 2px; }
.compact .fold { width: 18px; height: 7px; line-height: 5px; }
.compact .strip { height: 19px; margin: 0 3px 0 1px; }
.compact .slot { padding: 13px 0 0 2px; line-height: 5px; }
.compact .slot i { width: 5px; height: 5px; line-height: 5px; right: 2px; bottom: 2px; }
```
